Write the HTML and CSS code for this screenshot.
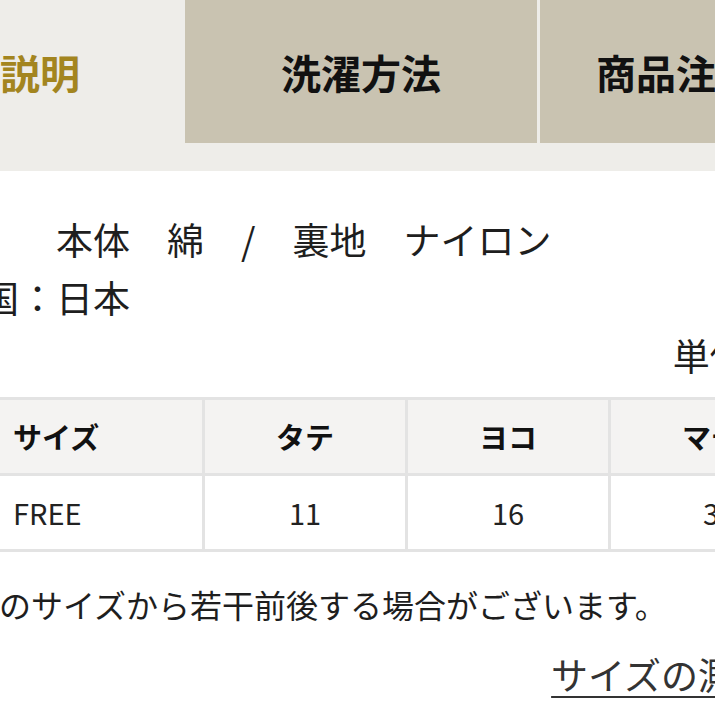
FILE: index.html
```html
<!DOCTYPE html>
<html lang="ja">
<head>
<meta charset="utf-8">
<title>商品説明</title>
<link rel="stylesheet" href="styles.css">
</head>
<body>
<nav class="tabs">
  <div class="tab tab-active">商品説明</div>
  <div class="tab">洗濯方法</div>
  <div class="tab">商品注意事項</div>
</nav>
<main class="content">
  <p class="spec">素材　　本体　綿　/　裏地　ナイロン</p>
  <p class="spec">原産国：日本</p>
  <p class="unit">単位：cm</p>
  <table class="size-table">
    <colgroup>
      <col class="col-first">
      <col class="col">
      <col class="col">
      <col class="col">
    </colgroup>
    <thead>
      <tr>
        <th class="cell-left">サイズ</th>
        <th>タテ</th>
        <th>ヨコ</th>
        <th>マチ</th>
      </tr>
    </thead>
    <tbody>
      <tr>
        <td class="cell-left">FREE</td>
        <td>11</td>
        <td>16</td>
        <td>3</td>
      </tr>
    </tbody>
  </table>
  <p class="note">※表記のサイズから若干前後する場合がございます。</p>
  <p class="link-row"><a class="size-link" href="#">サイズの測り方</a></p>
</main>
</body>
</html>
```

FILE: styles.css
```css
html, body {
  margin: 0;
  padding: 0;
  overflow: hidden;
  background: #ffffff;
}

body {
  font-family: "Noto Sans CJK JP", "Noto Sans", sans-serif;
  color: #1e1e1e;
}

.tabs {
  display: flex;
  gap: 3px;
  margin-left: -170px;
  padding-bottom: 28px;
  background: #eeede9;
  width: max-content;
}

.tab {
  flex: 0 0 352px;
  box-sizing: border-box;
  height: 143px;
  display: flex;
  align-items: center;
  justify-content: center;
  font-size: 40px;
  font-weight: 700;
  background: #c9c3b1;
  color: #111111;
  white-space: nowrap;
}

.tab-active {
  background: #eeede9;
  color: #a3851f;
  padding-right: 12px;
}

.content {
  margin-left: -92px;
  width: 931px;
  padding-top: 39px;
}

.spec {
  margin: 0;
  font-size: 37px;
  line-height: 58px;
  white-space: nowrap;
}

.unit {
  margin: 0;
  font-size: 37px;
  line-height: 58px;
  text-align: right;
  padding-right: 2px;
}

.size-table {
  margin: 13px 0 0 89px;
  border-collapse: separate;
  border-spacing: 0;
  table-layout: fixed;
  width: 817px;
  border-top: 3px solid #e3e3e3;
  border-left: 3px solid #e3e3e3;
}

.col-first {
  width: 205px;
}

.col {
  width: 203px;
}

.size-table th,
.size-table td {
  padding: 0;
  border-right: 3px solid #e3e3e3;
  border-bottom: 3px solid #e3e3e3;
  font-size: 29px;
  line-height: 73px;
  text-align: center;
  white-space: nowrap;
}

.size-table th {
  background: #f4f3f2;
  font-weight: 700;
  color: #111111;
}

.size-table td {
  background: #ffffff;
  font-weight: 400;
  color: #222222;
}

.size-table .cell-left {
  text-align: left;
  padding-left: 13px;
}

.note {
  margin: 27px 0 0 -5px;
  font-size: 32px;
  line-height: 50px;
  white-space: nowrap;
}

.link-row {
  margin: 16px 0 0;
  font-size: 37px;
  line-height: 58px;
  text-align: right;
  padding-right: 30px;
}

.size-link {
  color: #333333;
  text-decoration: underline;
  text-decoration-thickness: 2px;
  text-underline-offset: 6px;
}
```
